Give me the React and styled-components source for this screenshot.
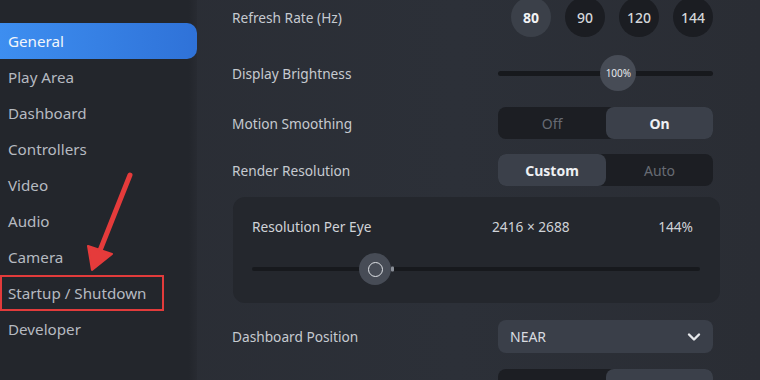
import React from "react";
import styled, { createGlobalStyle } from "styled-components";

const Global = createGlobalStyle`
  html, body { margin: 0; padding: 0; background: #2a2d35; }
  body { font-family: "Noto Sans", "Open Sans", sans-serif; }
  * { box-sizing: border-box; }
`;

const Screen = styled.div`
  width: 760px;
  height: 380px;
  overflow: hidden;
  display: flex;
  position: relative;
  background: linear-gradient(90deg, #292c33 0%, #2c3038 60%, #2a2d34 100%);
`;

const Sidebar = styled.nav`
  width: 197px;
  flex: none;
  padding-top: 23px;
  background: linear-gradient(90deg, #23262c 0%, #23262c 96%, #282b32 100%);
  display: flex;
  flex-direction: column;
  position: relative;
`;

const NavItem = styled.div`
  height: 36px;
  flex: none;
  display: flex;
  align-items: center;
  padding-left: 8px;
  font-size: 15.2px;
  color: ${(p) => (p.$active ? "#f2f6fb" : "#b6bac1")};
  border-radius: ${(p) => (p.$active ? "0 10px 10px 0" : "0")};
  background: ${(p) =>
    p.$active ? "linear-gradient(90deg, #3d8ef0 0%, #2f72d8 100%)" : "transparent"};
  width: ${(p) => (p.$highlight ? "164px" : "100%")};
  outline: ${(p) => (p.$highlight ? "2.5px solid #e23b3b" : "none")};
  outline-offset: -2px;
`;

const Arrow = styled.svg`
  position: absolute;
  left: 80px;
  top: 168px;
  pointer-events: none;
`;

const Main = styled.main`
  flex: 1;
  padding-left: 35px;
  margin-top: -3px;
  display: flex;
  flex-direction: column;
`;

const Row = styled.div`
  flex: none;
  display: grid;
  grid-template-columns: 266px 215px;
  grid-template-rows: 100%;
  align-items: center;
  margin-top: ${(p) => p.$top || 0}px;
  height: ${(p) => p.$h}px;
`;

const Label = styled.div`
  font-size: 13.7px;
  color: #c6cad0;
`;

const Circles = styled.div`
  display: flex;
  justify-content: flex-end;
  gap: 14px;
`;

const Circle = styled.div`
  width: 40px;
  height: 40px;
  border-radius: 50%;
  display: flex;
  align-items: center;
  justify-content: center;
  font-size: 14px;
  font-weight: ${(p) => (p.$on ? 700 : 500)};
  color: ${(p) => (p.$on ? "#f2f3f5" : "#d4d6da")};
  background: ${(p) => (p.$on ? "#3b4049" : "#1b1d22")};
`;

const Slider = styled.div`
  position: relative;
  flex: none;
  height: ${(p) => p.$h}px;
  display: flex;
  align-items: center;
`;

const Track = styled.div`
  width: 100%;
  height: ${(p) => p.$t || 5}px;
  border-radius: 3px;
  background: #17191d;
`;

const Knob = styled.div`
  position: absolute;
  top: 50%;
  transform: translate(-50%, -50%);
  width: ${(p) => p.$d}px;
  height: ${(p) => p.$d}px;
  border-radius: 50%;
  background: #474c56;
  display: flex;
  align-items: center;
  justify-content: center;
  font-size: 10px;
  color: #e6e8eb;
`;

const Ring = styled.div`
  width: 15px;
  height: 15px;
  border-radius: 50%;
  border: 1.6px solid #dfe2e6;
`;

const Notch = styled.div`
  position: absolute;
  top: 50%;
  transform: translateY(-50%);
  width: 3px;
  height: 5px;
  border-radius: 1px;
  background: #8a8f98;
`;

const Toggle = styled.div`
  height: 32px;
  border-radius: 8px;
  background: #1c1e23;
  display: grid;
  grid-template-columns: 108px 107px;
`;

const Seg = styled.div`
  border-radius: 8px;
  display: flex;
  align-items: center;
  justify-content: center;
  font-size: 14px;
  font-weight: ${(p) => (p.$on ? 700 : 400)};
  color: ${(p) => (p.$on ? "#eef0f3" : "#676b73")};
  background: ${(p) => (p.$on ? "#3b404a" : "transparent")};
`;

const Panel = styled.div`
  flex: none;
  margin-top: 11px;
  width: 487px;
  margin-left: 1px;
  height: 106px;
  border-radius: 12px;
  background: #24272d;
  padding: 19px 20px 0 19px;
  display: flex;
  flex-direction: column;
`;

const PanelHead = styled.div`
  display: grid;
  grid-template-columns: 240px 1fr auto;
  align-items: center;
  height: 20px;
  font-size: 13.7px;
  color: #d0d3d8;
  padding-right: 7px;
`;

const Select = styled.div`
  height: 33px;
  border-radius: 8px;
  background: #3a3f49;
  display: flex;
  align-items: center;
  justify-content: space-between;
  padding: 0 12px 0 12px;
  font-size: 14px;
  color: #d8dbe0;
`;

const Chevron = () => (
  <svg width="14" height="10" viewBox="0 0 14 10">
    <path d="M2 2.5 L7 7.5 L12 2.5" fill="none" stroke="#e6e8eb" strokeWidth="2.4" strokeLinecap="round" strokeLinejoin="round" />
  </svg>
);

const nav = ["General", "Play Area", "Dashboard", "Controllers", "Video", "Audio", "Camera", "Startup / Shutdown", "Developer"];

export default function App() {
  return (
    <>
      <Global />
      <Screen>
        <Sidebar>
          {nav.map((n, i) => (
            <NavItem key={n} $active={i === 0} $highlight={n === "Startup / Shutdown"}>
              {n}
            </NavItem>
          ))}
          <Arrow width="60" height="110" viewBox="0 0 60 110">
            <path d="M50 7 L17 90" stroke="#e53b3b" strokeWidth="5" strokeLinecap="round" />
            <path d="M12 102 L8 78 L32 86 Z" fill="#e53b3b" stroke="#e53b3b" strokeWidth="2" strokeLinejoin="round" />
          </Arrow>
        </Sidebar>
        <Main>
          <Row $h={40}>
            <Label>Refresh Rate (Hz)</Label>
            <Circles>
              <Circle $on>80</Circle>
              <Circle>90</Circle>
              <Circle>120</Circle>
              <Circle>144</Circle>
            </Circles>
          </Row>
          <Row $h={36} $top={18}>
            <Label>Display Brightness</Label>
            <Slider $h={36}>
              <Track $t={5} />
              <Knob $d={36} style={{ left: "56%" }}>100%</Knob>
            </Slider>
          </Row>
          <Row $h={32} $top={16}>
            <Label>Motion Smoothing</Label>
            <Toggle>
              <Seg>Off</Seg>
              <Seg $on>On</Seg>
            </Toggle>
          </Row>
          <Row $h={32} $top={15}>
            <Label>Render Resolution</Label>
            <Toggle>
              <Seg $on>Custom</Seg>
              <Seg>Auto</Seg>
            </Toggle>
          </Row>
          <Panel>
            <PanelHead>
              <span>Resolution Per Eye</span>
              <span>2416 × 2688</span>
              <span>144%</span>
            </PanelHead>
            <Slider $h={32} style={{ marginTop: "17px", width: "448px" }}>
              <Track $t={4} />
              <Knob $d={32} style={{ left: "123px" }}>
                <Ring />
              </Knob>
              <Notch style={{ left: "139px" }} />
            </Slider>
          </Panel>
          <Row $h={33} $top={17}>
            <Label>Dashboard Position</Label>
            <Select>
              <span>NEAR</span>
              <Chevron />
            </Select>
          </Row>
          <Row $h={32} $top={16}>
            <Label>Notifications</Label>
            <Toggle>
              <Seg>Off</Seg>
              <Seg $on>On</Seg>
            </Toggle>
          </Row>
        </Main>
      </Screen>
    </>
  );
}
